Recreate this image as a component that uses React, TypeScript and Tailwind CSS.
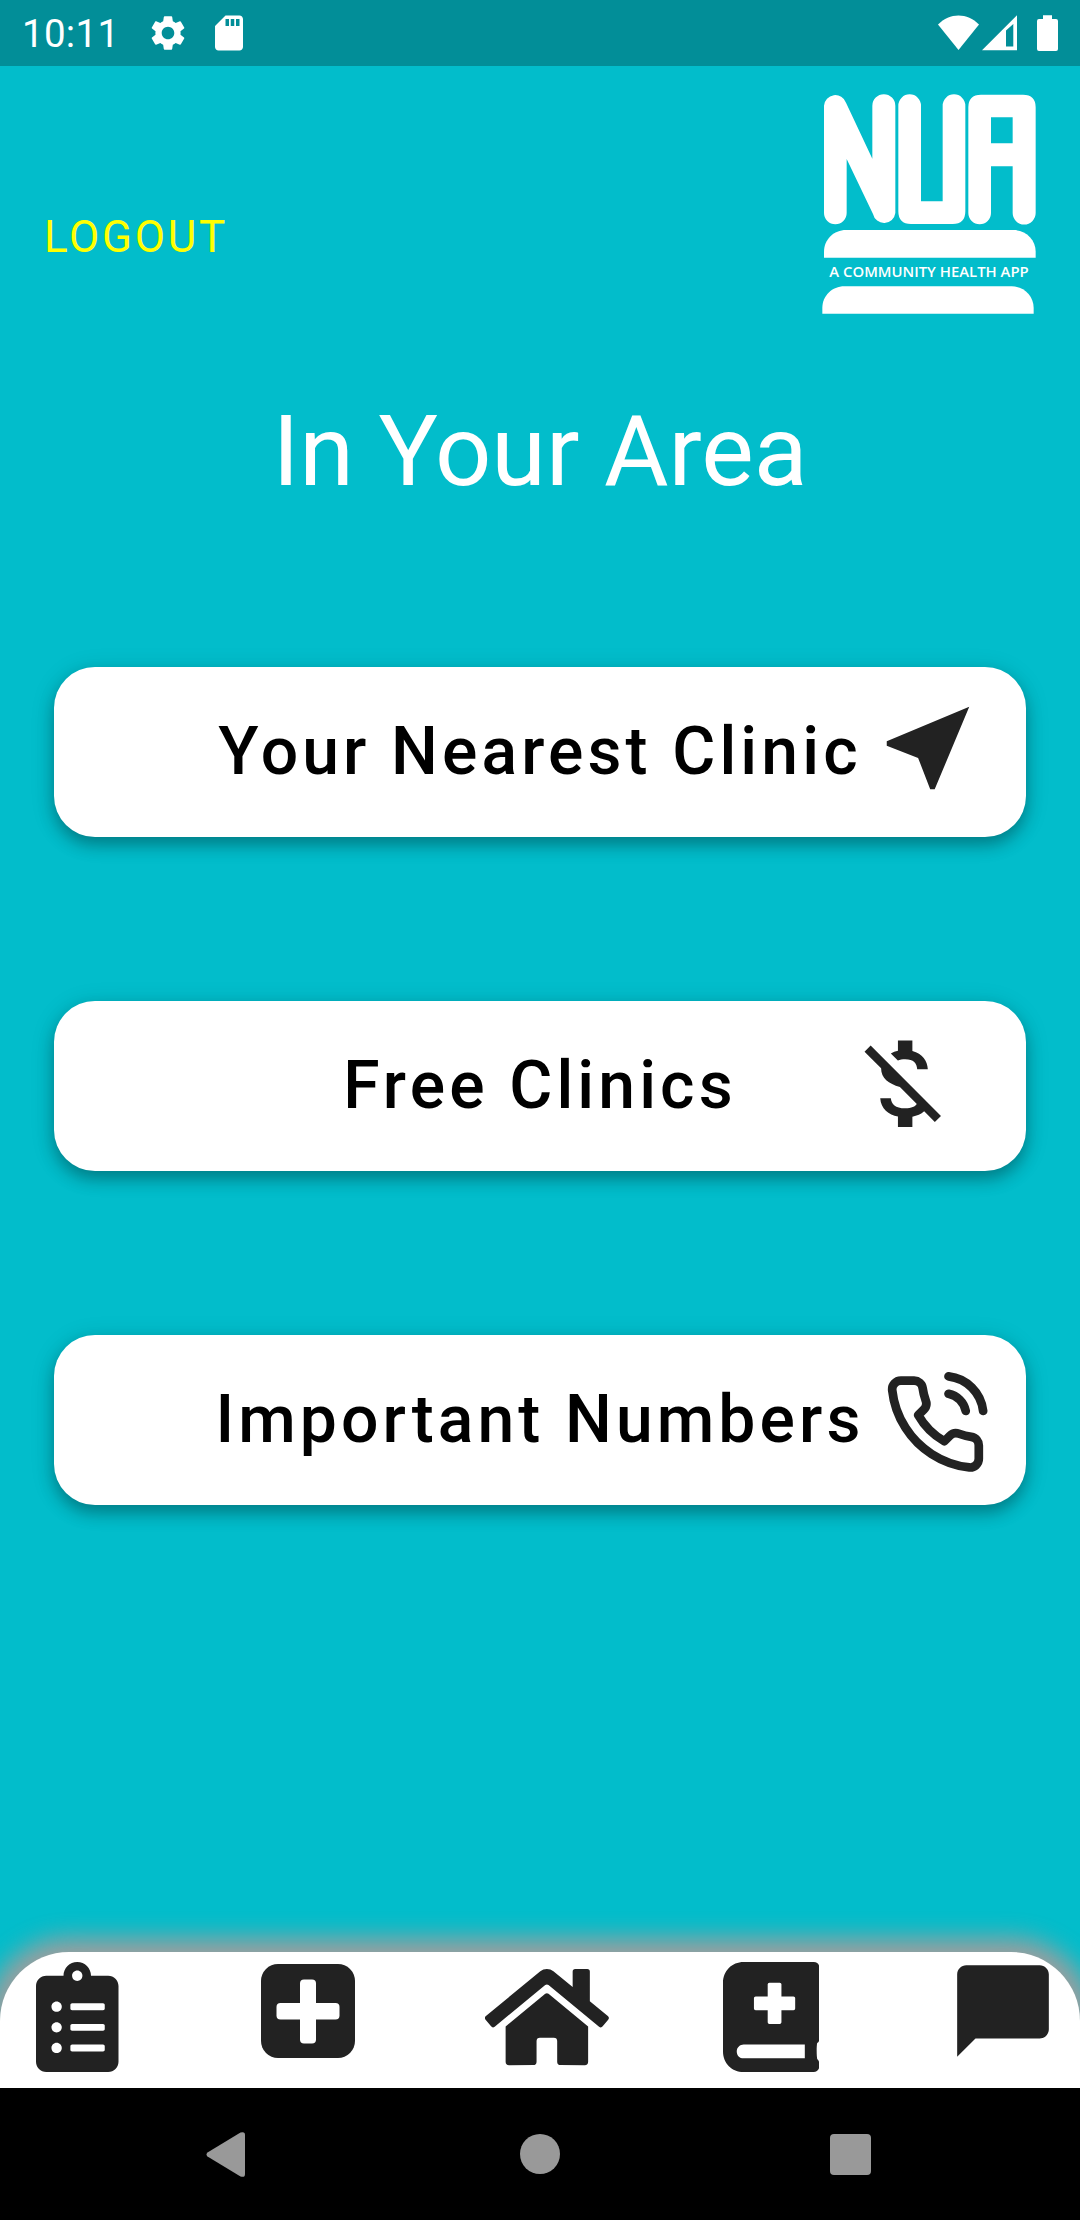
import React from "react";
import { MdNearMe, MdMoneyOff, MdChatBubble, MdSettings, MdSdCard } from "react-icons/md";
import { FaClipboardList, FaHome, FaBookMedical } from "react-icons/fa";
import { FiPhoneCall } from "react-icons/fi";

function StatusBar() {
  return (
    <header className="flex h-[66px] shrink-0 items-center bg-[#028e98] text-white">
      <span className="w-[124px] pt-[2px] pl-[22px] text-[38.5px] leading-none tracking-[0.3px]">10:11</span>
      <MdSettings className="ml-[23px] size-[42px]" />
      <MdSdCard className="ml-[19px] size-[42px]" />
      <svg className="ml-auto h-[36px] w-[41px]" viewBox="0 0 41 36" fill="currentColor">
        <path d="M20.5 35 L0 9.500 C6 3.500 13 .5 20.500 .5 S35 3.500 41 9.500 Z" />
      </svg>
      <svg className="ml-[3px] h-[36px] w-[35px]" viewBox="0 0 35 36" fill="currentColor" fillRule="evenodd">
        <path d="M0 35.300 L35 .3 V35.300 Z M24 15.500 L31.300 9 V31.600 H24 Z" />
      </svg>
      <svg className="mr-[22px] ml-[20px] h-[36px] w-[21px]" viewBox="0 0 21 36" fill="currentColor">
        <path d="M6 0.300 H15 V4 H19 Q21 4 21 6 V34 Q21 36 19 36 H2 Q0 36 0 34 V6 Q0 4 2 4 H6 Z" />
      </svg>
    </header>
  );
}

function Logo() {
  return (
    <svg className="h-[250px] w-[260px]" viewBox="0 0 780 750" fill="#fff">
      <path d="M72 77 A34 34 0 0 1 138 68 L217 236 V77 A34 34 0 0 1 286 77 V399 A34 34 0 0 1 219 402 L140 237 V399 A34 34 0 0 1 72 399 Z" />
      <path d="M295 77 A34 34 0 0 1 363 77 V364 H428 V77 A34 34 0 0 1 496 77 V394 Q496 432 458 432 H333 Q295 432 295 394 Z" />
      <path
        fillRule="evenodd"
        d="M505 82 Q505 44 543 44 H669 Q707 44 707 82 V399 A34 34 0 0 1 638 399 V259 H573 V399 A34 34 0 0 1 505 399 Z M573 112 H638 V190 H573 Z"
      />
      <path d="M72 533 V515 C72 478 102 450 138 450 H640 C677 450 707 478 707 515 V533 Z" />
      <text x="88" y="592" fontFamily="Open Sans, sans-serif" fontWeight="600" fontSize="45" textLength="598" lengthAdjust="spacingAndGlyphs">
        A COMMUNITY HEALTH APP
      </text>
      <path d="M67 701 V684 C67 647 97 619 133 619 H635 C671 619 701 647 701 684 V701 Z" />
    </svg>
  );
}

function MenuCard({ label, children }: { label: string; children: React.ReactNode }) {
  return (
    <button className="relative flex h-[170px] w-full items-center justify-center rounded-[41px] bg-white text-[66px] leading-none font-medium tracking-[4.125px] text-black shadow-[0_8px_16px_rgba(0,0,0,0.27),0_4px_26px_rgba(0,0,0,0.12)]">
      {label}
      {children}
    </button>
  );
}

function TabBar() {
  return (
    <nav className="flex h-[136px] shrink-0 items-start rounded-t-[69px] bg-white text-[#222222] shadow-[0_0_24px_14px_#9e9e9e]">
      <FaClipboardList className="mt-[10px] ml-[36px] h-[110px] w-[82.5px]" />
      <svg className="mt-[11.500px] ml-[142px] size-[94px]" viewBox="0 0 94 94">
        <rect width="94" height="94" rx="17" fill="currentColor" />
        <rect x="39" y="15.500" width="16" height="64" rx="4" fill="#fff" />
        <rect x="15.500" y="39" width="63" height="16.500" rx="4" fill="#fff" />
      </svg>
      <FaHome className="mt-[10px] ml-[130.700px] h-[110px] w-[123.750px]" />
      <FaBookMedical className="mt-[10px] ml-[114.250px] h-[110px] w-[96.250px]" />
      <MdChatBubble className="mt-[4px] ml-[128.500px] size-[110px]" />
    </nav>
  );
}

function SystemNav() {
  return (
    <footer className="relative flex h-[132px] shrink-0 items-center bg-black text-[#999999]">
      <svg className="ml-[206px] h-[45px] w-[39px]" viewBox="0 0 39 45" fill="currentColor">
        <path d="M1.500 20.500 L34.500 .6 Q39 -1 39 3 V42 Q39 46 34.500 44.400 L1.500 24.500 Q-.5 22.500 1.500 20.500 Z" />
      </svg>
      <div className="ml-[275px] size-10 rounded-full bg-current" />
      <div className="mt-px ml-[270px] size-[41px] rounded-[4px] bg-current" />
    </footer>
  );
}

export default function App() {
  return (
    <div className="flex h-[2220px] w-[1080px] flex-col overflow-hidden bg-[#02bdcb] font-['Roboto',sans-serif]">
      <StatusBar />
      <div className="flex h-[264px] shrink-0 items-start justify-between pt-[14px] pr-[20px] pl-[44px]">
        <button className="mt-[135px] text-[44px] leading-[44px] tracking-[2.75px] text-[#ffff00]">LOGOUT</button>
        <Logo />
      </div>
      <h1 className="mt-[63px] shrink-0 text-center text-[99px] leading-[116px] font-normal text-white">In Your Area</h1>
      <main className="mt-[157.500px] flex grow flex-col gap-[164px] px-[54px]">
        <MenuCard label="Your Nearest Clinic">
          <MdNearMe className="absolute top-[26px] left-[819.300px] size-[110px] text-[#222222]" />
        </MenuCard>
        <MenuCard label="Free Clinics">
          <MdMoneyOff className="absolute top-[25.300px] left-[790.500px] size-[115.500px] text-[#222222]" />
        </MenuCard>
        <MenuCard label="Important Numbers">
          <FiPhoneCall className="absolute top-[37.500px] left-[829px] size-[104.500px] text-[#222222]" />
        </MenuCard>
      </main>
      <TabBar />
      <SystemNav />
    </div>
  );
}
